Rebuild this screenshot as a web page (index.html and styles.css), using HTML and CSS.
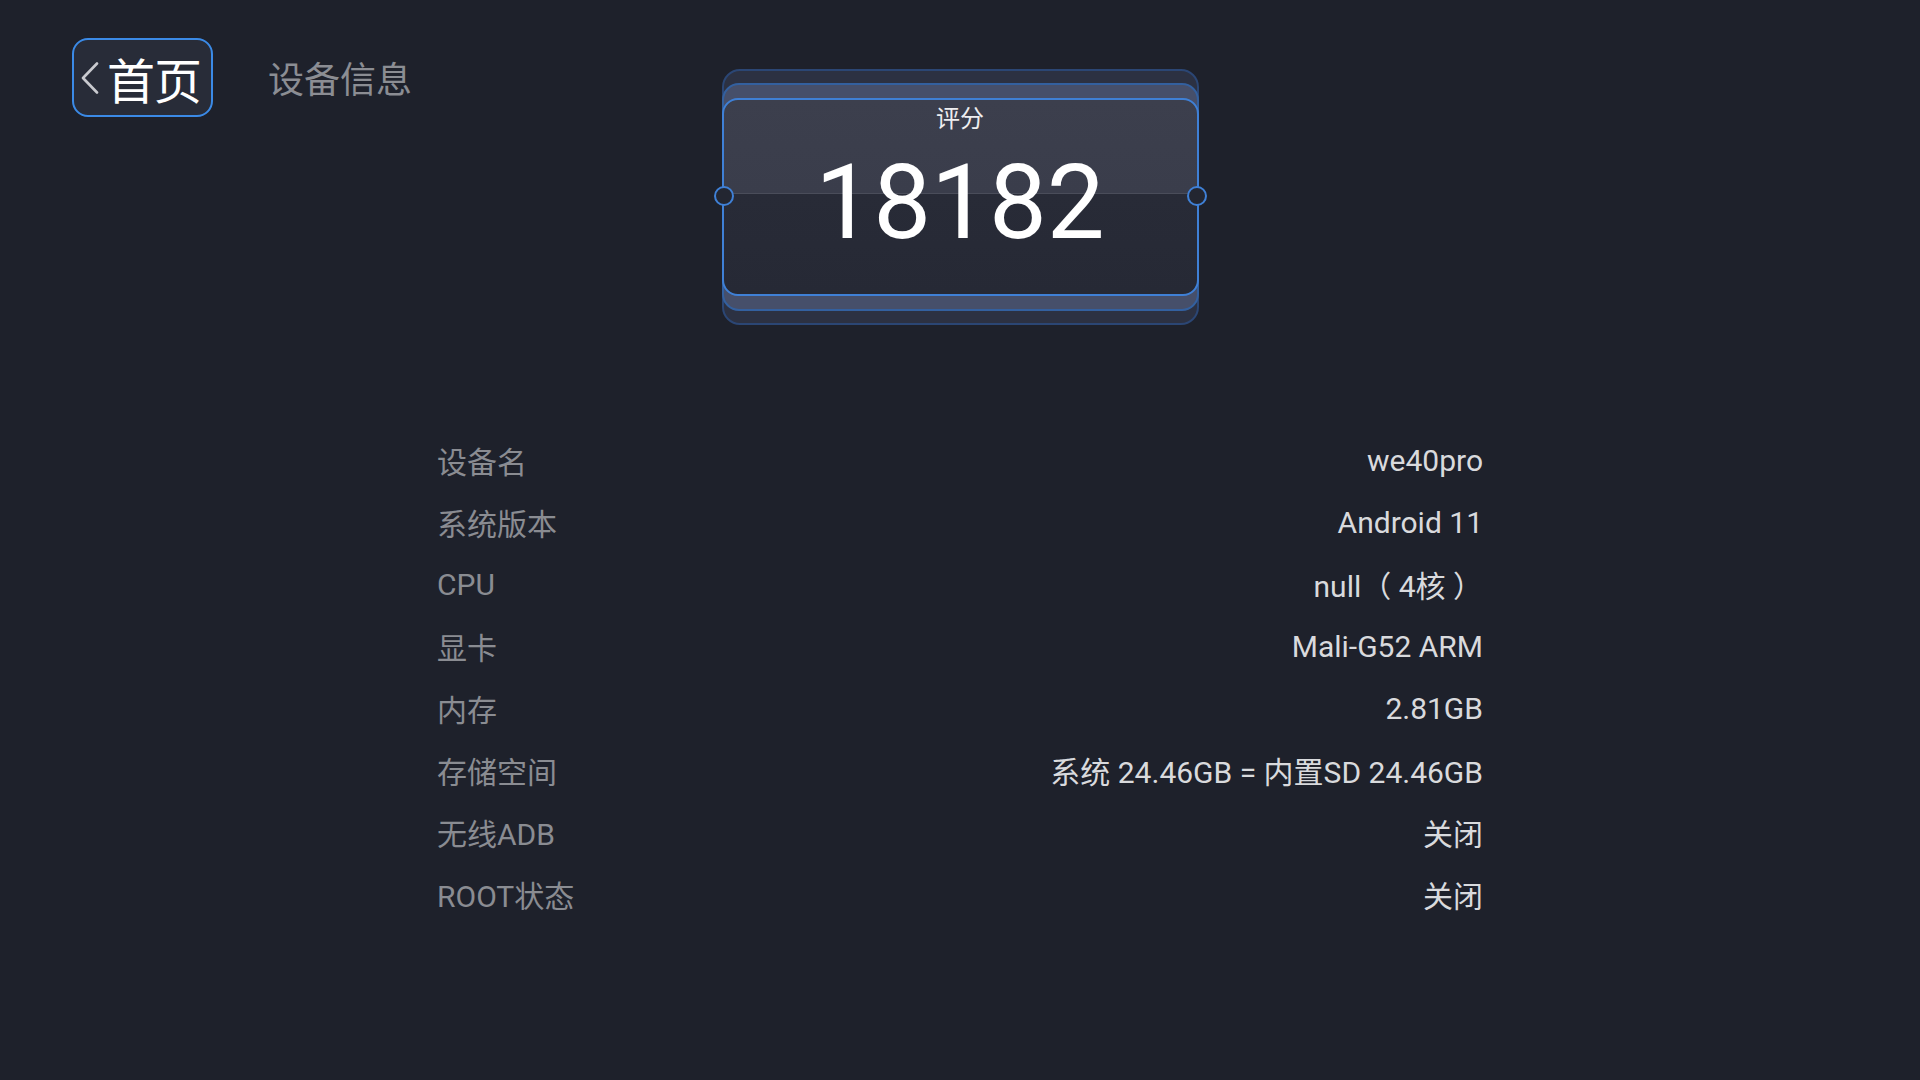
FILE: index.html
```html
<!DOCTYPE html>
<html lang="zh-CN">
<head>
<meta charset="utf-8">
<title>设备信息</title>
<link rel="stylesheet" href="styles.css">
</head>
<body>
<div class="page">
  <header class="top">
    <div class="nav">
      <button class="back-btn">
        <svg class="chev" width="18" height="32" viewBox="0 0 18 32"><path d="M16 1.5 L2 16 L16 30.5" fill="none" stroke="#c9cacf" stroke-width="2.6" stroke-linecap="round" stroke-linejoin="round"/></svg>
        <span class="back-text">首页</span>
      </button>
      <span class="page-title">设备信息</span>
    </div>
    <div class="score-stack">
      <div class="score-mid">
        <div class="score-card">
          <div class="score-label">评分</div>
          <div class="score-value">18182</div>
        </div>
      </div>
    </div>
    <div class="spacer"></div>
  </header>

  <section class="info">
    <div class="row"><span class="k">设备名</span><span class="v">we40pro</span></div>
    <div class="row"><span class="k">系统版本</span><span class="v">Android 11</span></div>
    <div class="row"><span class="k">CPU</span><span class="v">null（ 4核 ）</span></div>
    <div class="row"><span class="k">显卡</span><span class="v">Mali-G52 ARM</span></div>
    <div class="row"><span class="k">内存</span><span class="v">2.81GB</span></div>
    <div class="row"><span class="k">存储空间</span><span class="v">系统 24.46GB = 内置SD 24.46GB</span></div>
    <div class="row"><span class="k">无线ADB</span><span class="v">关闭</span></div>
    <div class="row"><span class="k">ROOT状态</span><span class="v">关闭</span></div>
  </section>
</div>
</body>
</html>
```

FILE: styles.css
```css
* { box-sizing: border-box; }
html, body {
  margin: 0;
  padding: 0;
  width: 1920px;
  height: 1080px;
  background: #1e212b;
  overflow: hidden;
}
body {
  font-family: Roboto, "Noto Sans CJK SC", sans-serif;
  color: #d9dadd;
}
.page {
  width: 1920px;
  height: 1080px;
}
.top {
  display: grid;
  grid-template-columns: 1fr auto 1fr;
  align-items: start;
  padding: 38px 72px 0;
}
.nav {
  display: flex;
  align-items: center;
  gap: 55px;
}
.back-btn {
  display: flex;
  align-items: center;
  gap: 8px;
  width: 141px;
  height: 79px;
  padding: 0 0 0 7px;
  background: #282c38;
  border: 2px solid #3b8ae6;
  border-radius: 16px;
  font-family: "Noto Sans CJK SC", sans-serif;
  color: #ffffff;
  cursor: pointer;
}
.chev { flex: none; }
.back-text {
  font-size: 48px;
  line-height: 1;
  letter-spacing: -1px;
}
.page-title {
  font-family: "Noto Sans CJK SC", sans-serif;
  font-size: 36px;
  color: #8b8d93;
  line-height: 1;
  margin-top: -2px;
}
.score-stack {
  margin-top: 31px;
  width: 477px;
  padding: 12px 0;
  background: #2c3142;
  border: 2px solid #2b4674;
  border-radius: 18px;
}
.score-mid {
  margin: 0 -2px;
  padding: 13px 0;
  background: #464f6a;
  border: 2px solid #33609f;
  border-radius: 17px;
}
.score-card {
  position: relative;
  margin: 0 -2px;
  height: 198px;
  border: 2px solid #3f80d6;
  border-radius: 16px;
  background: linear-gradient(to bottom, #3c3f4d 0, #3a3d4b 93px, #4a4d5a 93px, #4a4d5a 94px, #282b37 94px, #262935 100%);
  display: flex;
  flex-direction: column;
  align-items: center;
  text-align: center;
}
.score-card::before,
.score-card::after {
  content: "";
  position: absolute;
  top: 86px;
  width: 16px;
  height: 16px;
  border-radius: 50%;
  border: 2.5px solid #3f80d6;
  background: #232631;
}
.score-card::before { left: -10px; }
.score-card::after { right: -10px; }
.score-label {
  margin-top: 2px;
  font-family: "Noto Sans CJK SC", sans-serif;
  font-size: 24px;
  line-height: 30px;
  color: #eeeef0;
}
.score-value {
  margin-top: 19px;
  font-family: Roboto, sans-serif;
  font-size: 103px;
  line-height: 104px;
  color: #ffffff;
  letter-spacing: 0;
}
.info {
  width: 1046px;
  margin: 104px auto 0;
  display: flex;
  flex-direction: column;
}
.row {
  display: flex;
  justify-content: space-between;
  align-items: center;
  height: 62px;
  font-size: 30px;
  font-family: Roboto, "Noto Sans CJK SC", sans-serif;
}
.k { color: #8a8c92; }
.v { color: #d9dadd; }
```
